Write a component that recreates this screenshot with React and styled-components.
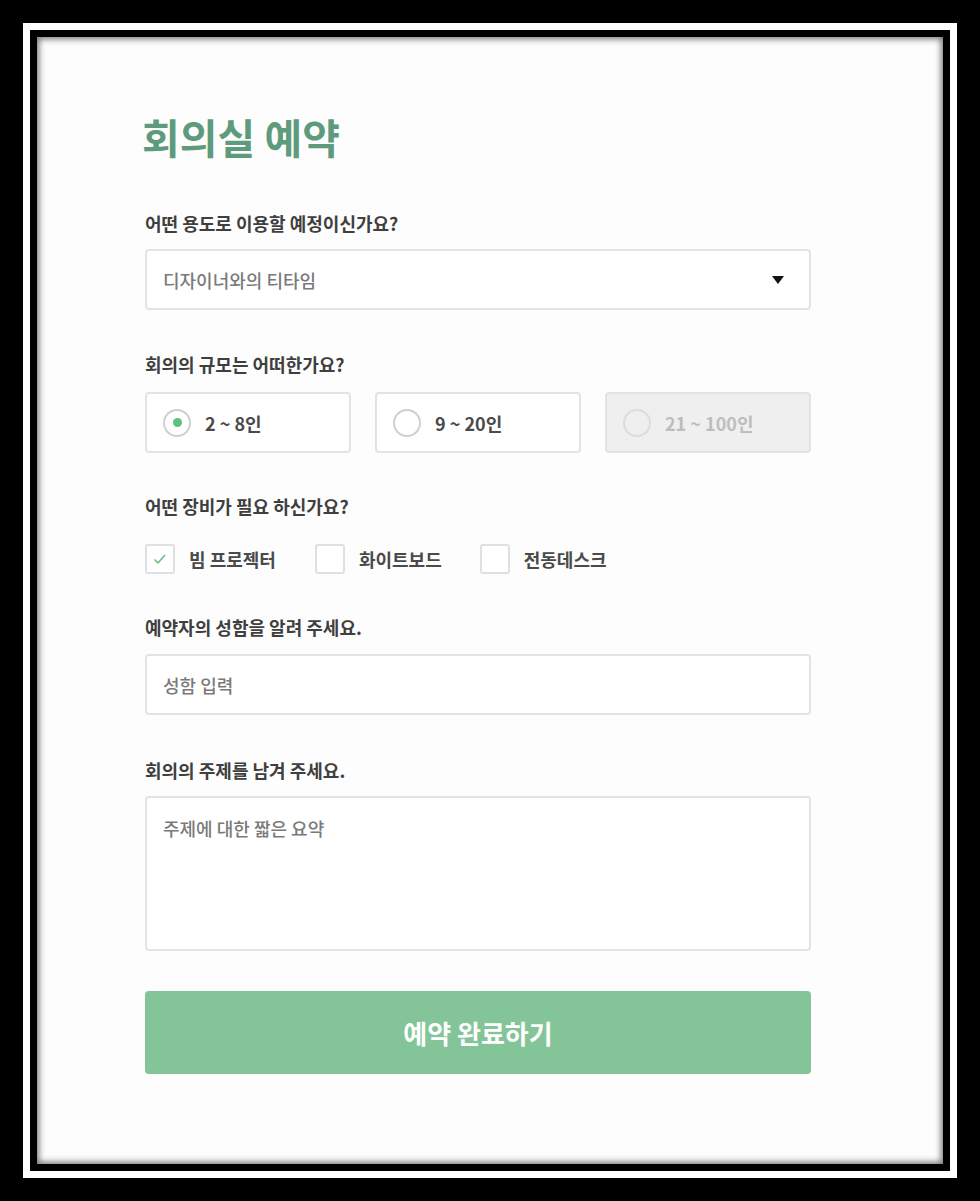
import React, { useState } from 'react';
import styled, { createGlobalStyle } from 'styled-components';

const GlobalStyle = createGlobalStyle`
  html, body {
    margin: 0;
    padding: 0;
    background: #000;
  }
  * {
    box-sizing: border-box;
  }
  body {
    font-family: "Noto Sans CJK KR", "Noto Sans", sans-serif;
  }
`;

const Frame = styled.div`
  width: 980px;
  height: 1201px;
  padding: 23px;
  background: #000;
`;

const WhiteRim = styled.div`
  height: 100%;
  border: 7px solid #fff;
  background: #000;
  padding: 7px;
`;

const Sheet = styled.div`
  height: 100%;
  background: #fdfdfd;
  box-shadow: inset 0 0 6px 2px rgba(0, 0, 0, 0.55);
  padding: 72px 0 0 108px;
`;

const Form = styled.form`
  width: 666px;
  display: flex;
  flex-direction: column;
`;

const Title = styled.h1`
  margin: 0 0 48px -3px;
  font-size: 41px;
  line-height: 54px;
  font-weight: 700;
  color: #5e9b7c;
`;

const Field = styled.div`
  display: flex;
  flex-direction: column;
  margin-bottom: ${p => p.$gap ?? 42}px;
`;

const Label = styled.label`
  font-size: 18px;
  line-height: 24px;
  font-weight: 700;
  color: #3f3f3f;
  margin-bottom: ${p => p.$gap ?? 14}px;
`;

const Box = styled.div`
  height: ${p => p.$h ?? 61}px;
  border: 2px solid #e3e3e3;
  border-radius: 4px;
  background: ${p => (p.$disabled ? '#efefef' : '#fff')};
  display: flex;
  align-items: center;
  padding: 0 16px;
`;

const SelectBox = styled(Box)`
  justify-content: space-between;
  padding-right: 25px;
`;

const Placeholder = styled.span`
  font-size: 18px;
  line-height: 24px;
  font-weight: 500;
  color: #7a7a7a;
`;

const Caret = styled.span`
  width: 0;
  height: 0;
  border-left: 6px solid transparent;
  border-right: 6px solid transparent;
  border-top: 8px solid #111;
`;

const RadioRow = styled.div`
  display: grid;
  grid-template-columns: repeat(3, 1fr);
  gap: 24px;
`;

const RadioCircle = styled.span`
  width: 28px;
  height: 28px;
  border-radius: 50%;
  border: 2px solid ${p => (p.$disabled ? '#dcdcdc' : '#d0d0d0')};
  background: ${p => (p.$disabled ? '#efefef' : '#fff')};
  display: flex;
  align-items: center;
  justify-content: center;
  margin-right: 14px;

  &::after {
    content: '';
    width: 9px;
    height: 9px;
    border-radius: 50%;
    background: ${p => (p.$checked ? '#5fbf7d' : 'transparent')};
  }
`;

const OptionText = styled.span`
  font-size: 18px;
  font-weight: 700;
  color: ${p => (p.$disabled ? '#bdbdbd' : '#4a4a4a')};
`;

const CheckRow = styled.div`
  display: flex;
  align-items: center;
  height: 30px;
`;

const CheckItem = styled.div`
  display: flex;
  align-items: center;
  margin-right: ${p => p.$gap}px;
`;

const CheckSquare = styled.span`
  width: 30px;
  height: 30px;
  border: 2px solid #e0e0e0;
  border-radius: 3px;
  background: #fff;
  display: flex;
  align-items: center;
  justify-content: center;
  margin-right: 14px;
`;

const TextArea = styled(Box)`
  align-items: flex-start;
  padding-top: 18px;
`;

const Submit = styled.button`
  height: 83px;
  border: none;
  border-radius: 4px;
  background: #83c598;
  color: #fff;
  font-family: "Noto Sans CJK KR", "Noto Sans", sans-serif;
  font-size: 26px;
  font-weight: 700;
`;

const sizes = [
  { label: '2 ~ 8인' },
  { label: '9 ~ 20인' },
  { label: '21 ~ 100인', disabled: true },
];

const equipment = [
  { label: '빔 프로젝터', checked: true, gap: 39 },
  { label: '화이트보드', gap: 38 },
  { label: '전동데스크', gap: 0 },
];

const Check = () => (
  <svg width="18" height="18" viewBox="0 0 18 18">
    <path d="M3.5 9.5 L7 13 L14 5" fill="none" stroke="#5fbf7d" strokeWidth="1.5" />
  </svg>
);

const App = () => {
  const [size] = useState(0);

  return (
    <Frame>
      <GlobalStyle />
      <WhiteRim>
        <Sheet>
          <Form onSubmit={e => e.preventDefault()}>
            <Title>회의실 예약</Title>

            <Field>
              <Label $gap={14}>어떤 용도로 이용할 예정이신가요?</Label>
              <SelectBox>
                <Placeholder>디자이너와의 티타임</Placeholder>
                <Caret />
              </SelectBox>
            </Field>

            <Field $gap={41}>
              <Label $gap={16}>회의의 규모는 어떠한가요?</Label>
              <RadioRow>
                {sizes.map((s, i) => (
                  <Box key={s.label} $h={61} $disabled={s.disabled}>
                    <RadioCircle $checked={i === size} $disabled={s.disabled} />
                    <OptionText $disabled={s.disabled}>{s.label}</OptionText>
                  </Box>
                ))}
              </RadioRow>
            </Field>

            <Field $gap={41}>
              <Label $gap={26}>어떤 장비가 필요 하신가요?</Label>
              <CheckRow>
                {equipment.map(eq => (
                  <CheckItem key={eq.label} $gap={eq.gap}>
                    <CheckSquare>{eq.checked && <Check />}</CheckSquare>
                    <OptionText>{eq.label}</OptionText>
                  </CheckItem>
                ))}
              </CheckRow>
            </Field>

            <Field $gap={43}>
              <Label $gap={15}>예약자의 성함을 알려 주세요.</Label>
              <Box>
                <Placeholder>성함 입력</Placeholder>
              </Box>
            </Field>

            <Field $gap={40}>
              <Label $gap={14}>회의의 주제를 남겨 주세요.</Label>
              <TextArea $h={155}>
                <Placeholder>주제에 대한 짧은 요약</Placeholder>
              </TextArea>
            </Field>

            <Submit type="submit">예약 완료하기</Submit>
          </Form>
        </Sheet>
      </WhiteRim>
    </Frame>
  );
};

export default App;
